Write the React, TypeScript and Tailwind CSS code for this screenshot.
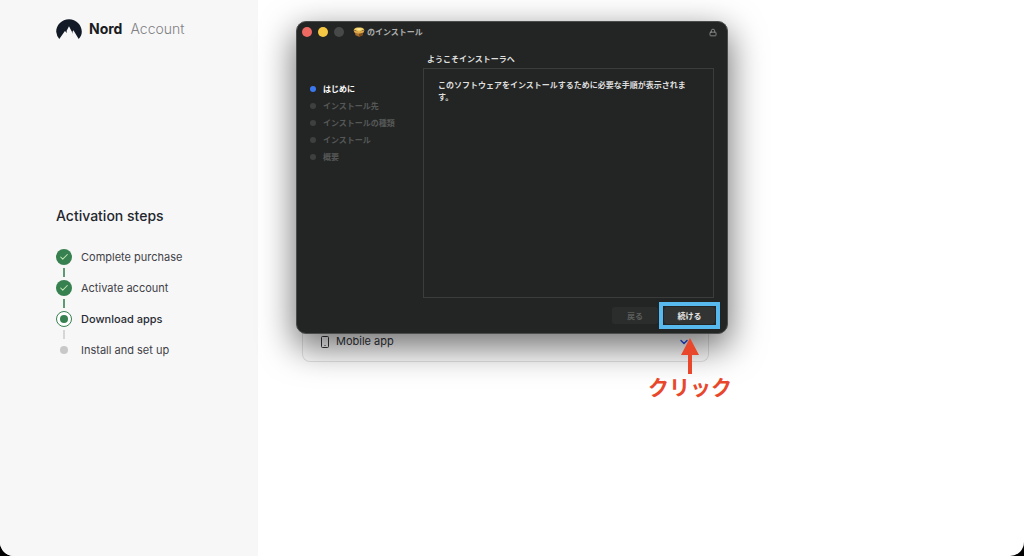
import { Check, ChevronDown, Lock } from "lucide-react";

const steps = [
  { label: "Complete purchase", state: "done" },
  { label: "Activate account", state: "done" },
  { label: "Download apps", state: "current" },
  { label: "Install and set up", state: "todo" },
];

const installerSteps = ["はじめに", "インストール先", "インストールの種類", "インストール", "概要"];

const NordLogo = () => (
  <svg viewBox="0 0 26 20" className="w-[26px] h-5" aria-hidden="true">
    <path
      fill="#111a26"
      d="M3.3 20A12.8 12.8 0 0 1 .2 12.8C.2 5.8 5.9.2 13 .2s12.8 5.6 12.8 12.6c0 2.7-1 5.2-3.1 7.2L17.4 11.2l-.9 1.5.6 2.2-4.1-7.7-2.5 4.7.6 2.2-2.2-2z"
    />
  </svg>
);

const PackageIcon = () => (
  <svg viewBox="0 0 12 11" className="w-3 h-[11px]" aria-hidden="true">
    <path fill="#a8702e" d="M1.6 4h8.8l-.9 4.2L6.1 9.8 2.5 8.2z" />
    <path fill="#7c4c1c" d="M6 5l4.400-1-.9 4.200L6 9.800z" />
    <path fill="#e0a94a" d="M.5 3L6 5l5.500-2-.9 2.400L7 6.400H5L1.400 5.400z" />
    <path fill="#f3cf62" d="M.7 2.600C2 .8 4 .5 6 .5s4.200.3 5.300 2.100L6 4.900z" />
    <path fill="#ffe79a" d="M3 1.900L6 1.100l3 .8-3 1.300z" />
  </svg>
);

const StepMarker = ({ state }: { state: string }) => {
  if (state === "done") {
    return (
      <span className="size-4 rounded-full bg-[#37804f] flex items-center justify-center">
        <Check className="size-[10px] text-[#c5e6b8]" strokeWidth={2.5} />
      </span>
    );
  }
  if (state === "current") {
    return (
      <span className="size-4 rounded-full border border-[#37804f] bg-white flex items-center justify-center">
        <span className="size-2 rounded-full bg-[#37804f]" />
      </span>
    );
  }
  return (
    <span className="size-4 flex items-center justify-center">
      <span className="size-2 rounded-full bg-[#c8c8c9]" />
    </span>
  );
};

const Sidebar = () => (
  <aside className="w-[258px] shrink-0 bg-[#f7f7f7] pl-14 pt-[17px]">
    <a href="#" className="flex items-center text-[14px] leading-6">
      <NordLogo />
      <span className="ml-[7px] font-bold text-[#1a1c22]">Nord</span>
      <span className="ml-2 font-light text-[#7f8084]">Account</span>
    </a>
    <h2 className="mt-[165px] text-[14px] leading-5 font-medium text-[#24262e]">Activation steps</h2>
    <ol className="mt-[23px]">
      {steps.map((step, index) => (
        <li key={step.label} className="flex gap-[9px]">
          <div className="flex flex-col items-center">
            <StepMarker state={step.state} />
            {index < steps.length - 1 && (
              <span
                className={`my-[3px] h-[9px] w-[2px] ${step.state === "done" ? "bg-[#5f9a73]" : "bg-[#d6d6d7]"}`}
              />
            )}
          </div>
          <span
            className={`text-[11px] leading-4 ${
              step.state === "current" ? "font-medium text-[#2a2c34]" : "text-[#3f4148]"
            }`}
          >
            {step.label}
          </span>
        </li>
      ))}
    </ol>
  </aside>
);

const InstallerWindow = () => (
  <section
    aria-label="インストーラ"
    className="absolute left-[38px] top-[21px] w-[432px] rounded-[10px] border border-[#4a4d4c] bg-[#232524] text-[8px] font-bold text-[#dededd] shadow-[0_12px_34px_2px_rgba(0,0,0,0.55)] font-['Inter','Noto_Sans_CJK_JP',sans-serif]"
  >
    <header className="flex items-center h-5 pl-[5px] pr-[10px]">
      <div className="flex gap-[6px]">
        <button aria-label="閉じる" className="size-[10px] rounded-full bg-[#ee6962]" />
        <button aria-label="しまう" className="size-[10px] rounded-full bg-[#f5c742]" />
        <button aria-label="拡大" disabled className="size-[10px] rounded-full bg-[#474948]" />
      </div>
      <span className="ml-[9px]">
        <PackageIcon />
      </span>
      <h1 className="ml-[2px] flex-1 text-[#adafae]">のインストール</h1>
      <Lock className="w-2 h-[9px] text-[#949695]" strokeWidth={2.5} />
    </header>
    <div className="flex pt-[10px] pr-[13px]">
      <ol className="w-[126px] shrink-0 pl-[13px] pt-[28px]">
        {installerSteps.map((label, index) => (
          <li
            key={label}
            className={`flex items-center gap-[7px] h-[17px] ${index === 0 ? "text-white" : "text-[#565857]"}`}
          >
            <span className={`size-[6px] rounded-full ${index === 0 ? "bg-[#3b78f0]" : "bg-[#3e403f]"}`} />
            {label}
          </li>
        ))}
      </ol>
      <div className="flex-1">
        <h2 className="pl-1 leading-[15px]">ようこそインストーラへ</h2>
        <div className="mt-px h-[230px] border border-[#3b3d3c] pl-[14px] pt-[10px]">
          <p className="leading-3">
            このソフトウェアをインストールするために必要な手順が表示されま
            <br />
            す。
          </p>
        </div>
      </div>
    </div>
    <footer className="flex justify-end gap-[6px] pt-[9px] pr-3 pb-[9px]">
      <button disabled className="w-[46px] h-[17px] rounded-[3px] bg-[#2b2d2c] text-[#5c5e5d]">
        戻る
      </button>
      <button className="relative w-[51px] h-[17px] rounded-[3px] bg-[#323433] text-[#e6e6e5]">
        続ける
        <span className="absolute -inset-[5px] border-4 border-[#58b9ee]" />
      </button>
    </footer>
  </section>
);

const ClickHint = () => (
  <div className="absolute left-[390px] top-[338px] w-[84px] flex flex-col items-center text-[#e8472b]">
    <svg viewBox="0 0 18 36" className="w-[18px] h-9" aria-hidden="true">
      <path fill="currentColor" d="M9 0l9 17h-7v19H7V17H0z" />
    </svg>
    <span className="whitespace-nowrap text-[21px] leading-6 font-bold font-['Noto_Sans_CJK_JP',sans-serif]">
      クリック
    </span>
  </div>
);

const App = () => {
  return (
    <div className="min-h-screen bg-black flex font-['Inter',sans-serif]">
      <div className="flex flex-1 overflow-hidden rounded-b-[14px] bg-white">
        <Sidebar />
        <main className="relative flex-1 pl-[44px] pt-[322px]">
          <button className="flex items-center w-full max-w-[407px] h-10 rounded-b-lg border border-t-0 border-[#e4e4e6] px-[18px] text-[11px] text-[#33353b]">
            <svg viewBox="0 0 8 12" className="w-2 h-3" fill="none" stroke="currentColor" aria-hidden="true">
              <rect x="0.5" y="0.5" width="7" height="11" rx="1" />
              <path d="M3.5 9.5h1" />
            </svg>
            <span className="ml-[7px] flex-1 text-left">Mobile app</span>
            <ChevronDown className="size-3 text-[#2a4df0]" strokeWidth={3} />
          </button>
          <InstallerWindow />
          <ClickHint />
        </main>
      </div>
    </div>
  );
};

export default App;
